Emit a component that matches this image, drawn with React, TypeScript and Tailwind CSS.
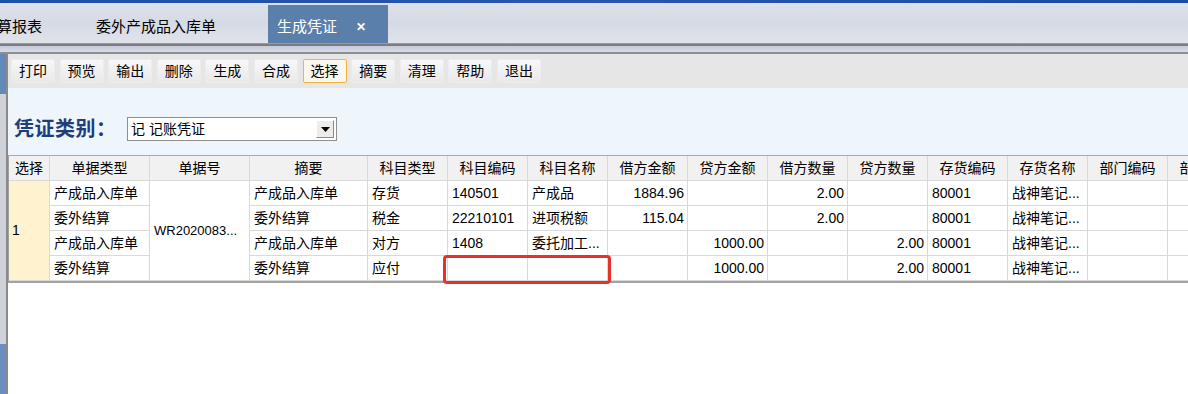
import React from "react";

const F = "font-['Liberation_Sans','Noto_Sans_CJK_SC',sans-serif]";

const headers = [
  "选择", "单据类型", "单据号", "摘要", "科目类型", "科目编码", "科目名称", "借方金额",
  "贷方金额", "借方数量", "贷方数量", "存货编码", "存货名称", "部门编码", "部门名称",
];

type Row = {
  type: string; summary: string; kind: string; code: string; name: string;
  debit: string; credit: string; dq: string; cq: string; inv: string; invName: string;
};

const rows: Row[] = [
  { type: "产成品入库单", summary: "产成品入库单", kind: "存货", code: "140501", name: "产成品", debit: "1884.96", credit: "", dq: "2.00", cq: "", inv: "80001", invName: "战神笔记..." },
  { type: "委外结算", summary: "委外结算", kind: "税金", code: "22210101", name: "进项税额", debit: "115.04", credit: "", dq: "2.00", cq: "", inv: "80001", invName: "战神笔记..." },
  { type: "产成品入库单", summary: "产成品入库单", kind: "对方", code: "1408", name: "委托加工...", debit: "", credit: "1000.00", dq: "", cq: "2.00", inv: "80001", invName: "战神笔记..." },
  { type: "委外结算", summary: "委外结算", kind: "应付", code: "", name: "", debit: "", credit: "1000.00", dq: "", cq: "2.00", inv: "80001", invName: "战神笔记..." },
];

const buttons = ["打印", "预览", "输出", "删除", "生成", "合成", "选择", "摘要", "清理", "帮助", "退出"];

const cell = "border-r border-b border-[#d9d9d9] h-[25px] flex items-center overflow-hidden whitespace-nowrap text-[14px] text-black";

export default function App() {
  return (
    <div className={`w-[1188px] h-[394px] overflow-hidden flex flex-col bg-white ${F}`}>
      {/* top blue strip */}
      <div className="h-[3px] bg-gradient-to-r from-[#1c4fa6] via-[#2a55b0] to-[#1a4aa0]" />
      {/* tab bar */}
      <div className="h-[40px] flex items-end bg-gradient-to-b from-[#dde1ea] via-[#d5dae4] to-[#e1e3eb] text-[15px] text-black">
        <div className="h-[38px] flex items-center pt-[6px] -ml-[3px] w-[51px]">算报表</div>
        <div className="h-[38px] flex items-center pt-[6px] ml-[48px] w-[120px]">委外产成品入库单</div>
        <div className="h-[38px] ml-[52px] w-[120px] bg-[#5b7fab] flex items-center pt-[6px] pl-[9px] text-white">
          <span>生成凭证</span>
          <span className="ml-[19px] text-[12px] font-bold">✕</span>
        </div>
      </div>
      {/* separator */}
      <div className="h-[11px] flex flex-col">
        <div className="h-[1px] bg-[#9a9a9a]" />
        <div className="h-[2px] bg-[#7c7c7c]" />
        <div className="h-[6px] bg-gradient-to-b from-[#c6cadc] to-[#d8dbe8]" />
        <div className="h-[2px] bg-[#8e8e8e]" />
      </div>
      {/* body */}
      <div className="flex-1 flex min-h-0">
        <div className="w-[6px] flex flex-col">
          <div className="h-[40px] bg-[#6388ba]" />
          <div className="flex-1 bg-[#cfd2d8]" />
          <div className="h-[50px] bg-[#6a8ec0]" />
        </div>
        <div className="w-[2px] bg-[#8a8a8a]" />
        <div className="flex-1 min-w-0 flex flex-col">
          {/* toolbar */}
          <div className="h-[34px] bg-[#e6e6e6] flex items-center pl-[3px] gap-[4.6px]">
            {buttons.map((b) => (
              <div
                key={b}
                className={
                  b === "选择"
                    ? "w-[44px] h-[24px] flex items-center justify-center text-[14px] text-black rounded-[2px] border border-[#f2b43c] bg-[#fbf7ee]"
                    : "w-[44px] h-[24px] flex items-center justify-center text-[14px] text-black rounded-[2px] border border-[#ececec] bg-gradient-to-b from-[#f7f7f7] to-[#e9e9e9]"
                }
              >
                {b}
              </div>
            ))}
          </div>
          {/* voucher type */}
          <div className="h-[67px] bg-[#eef5fb] flex items-start pt-[29px]">
            <div className="w-[119px] pl-[6px] h-[24px] flex items-center text-[20px] font-bold text-[#1f3d7c] tracking-[0.5px]">
              凭证类别：
            </div>
            <div className="w-[210px] h-[24px] bg-white border border-[#8f8f8f] flex items-center justify-between pl-[3px] pr-[2px]">
              <span className="text-[14px] text-black">记 记账凭证</span>
              <div className="w-[18px] h-[18px] bg-[#ececec] border border-t-white border-l-white border-r-[#8a8a8a] border-b-[#8a8a8a] flex items-center justify-center">
                <svg width="9" height="5" viewBox="0 0 9 5"><path d="M0 0h9L4.5 5z" fill="#000" /></svg>
              </div>
            </div>
          </div>
          {/* table area */}
          <div className="flex-1 relative bg-white border-t border-[#a9a9a9] overflow-hidden">
            <div className="grid grid-cols-[41px_100px_100px_118px_repeat(11,80px)] w-max border-l border-[#a0a0a0]">
              {headers.map((h) => (
                <div key={h} className={`${cell} justify-center bg-[#f1f1f1]`}>{h}</div>
              ))}
              <div className="border-r border-b border-[#d9d9d9] bg-[#fff2cf] flex items-center pl-[3px] text-[14px]" style={{ gridColumn: 1, gridRow: "2 / span 4" }}>1</div>
              <div className="border-r border-b border-[#d9d9d9] flex items-center pl-[4px] text-[13px] whitespace-nowrap" style={{ gridColumn: 3, gridRow: "2 / span 4" }}>WR2020083...</div>
              {rows.map((r, i) => {
                const gr = i + 2;
                return (
                  <React.Fragment key={i}>
                    <div className={`${cell} pl-[4px]`} style={{ gridColumn: 2, gridRow: gr }}>{r.type}</div>
                    <div className={`${cell} pl-[4px]`} style={{ gridColumn: 4, gridRow: gr }}>{r.summary}</div>
                    <div className={`${cell} pl-[4px]`} style={{ gridColumn: 5, gridRow: gr }}>{r.kind}</div>
                    <div className={`${cell} pl-[4px] text-[13px]`} style={{ gridColumn: 6, gridRow: gr }}>{r.code}</div>
                    <div className={`${cell} pl-[4px]`} style={{ gridColumn: 7, gridRow: gr }}>{r.name}</div>
                    <div className={`${cell} justify-end pr-[3px] text-[13px]`} style={{ gridColumn: 8, gridRow: gr }}>{r.debit}</div>
                    <div className={`${cell} justify-end pr-[3px] text-[13px]`} style={{ gridColumn: 9, gridRow: gr }}>{r.credit}</div>
                    <div className={`${cell} justify-end pr-[3px] text-[13px]`} style={{ gridColumn: 10, gridRow: gr }}>{r.dq}</div>
                    <div className={`${cell} justify-end pr-[3px] text-[13px]`} style={{ gridColumn: 11, gridRow: gr }}>{r.cq}</div>
                    <div className={`${cell} pl-[4px] text-[13px]`} style={{ gridColumn: 12, gridRow: gr }}>{r.inv}</div>
                    <div className={`${cell} pl-[4px]`} style={{ gridColumn: 13, gridRow: gr }}>{r.invName}</div>
                    <div className={cell} style={{ gridColumn: 14, gridRow: gr }} />
                    <div className={cell} style={{ gridColumn: 15, gridRow: gr }} />
                  </React.Fragment>
                );
              })}
            </div>
            <div className="h-[2px] bg-[#a3a3a3] w-full" />
            {/* red highlight */}
            <div className="absolute left-[435px] top-[99px] w-[168px] h-[29px] border-[3px] border-[#e8312b] rounded-[4px]" />
          </div>
        </div>
      </div>
    </div>
  );
}
